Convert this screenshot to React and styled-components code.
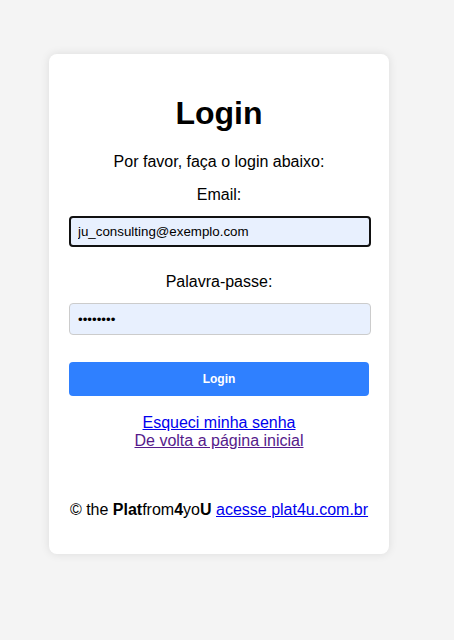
import React from 'react';
import styled, { createGlobalStyle } from 'styled-components';

const GlobalStyle = createGlobalStyle`
  body {
    margin: 0;
    background: #f4f4f4;
    font-family: "Liberation Sans", Arial, sans-serif;
    color: #000;
  }
`;

const Page = styled.div`
  padding: 54px 0 0 49px;
  min-height: 640px;
  box-sizing: border-box;
`;

const Card = styled.div`
  width: 340px;
  box-sizing: border-box;
  padding: 16px 20px 35px;
  background: #fff;
  border-radius: 8px;
  box-shadow: 0 0 10px rgba(0, 0, 0, 0.1);
  text-align: center;
`;

const Title = styled.h1`
  font-size: 32px;
  font-weight: bold;
  margin: 25px 0 21px;
  line-height: 37px;
`;

const Text = styled.p`
  font-size: 16px;
  line-height: 18px;
  margin: 0 0 ${(p) => p.$gap || 0}px;
`;

const Label = styled.label`
  display: block;
  font-size: 16px;
  line-height: 18px;
  margin-bottom: 12px;
`;

const Field = styled.div`
  margin-bottom: ${(p) => p.$gap}px;
`;

const Input = styled.input`
  display: block;
  width: calc(100% + 2px);
  box-sizing: border-box;
  height: ${(p) => (p.$focused ? 31 : 32)}px;
  padding: 0 ${(p) => (p.$focused ? 7 : 8)}px;
  font-family: "Liberation Sans", Arial, sans-serif;
  font-size: 13.33px;
  color: #000;
  background: #e8f0fe;
  border: ${(p) => (p.$focused ? '2px solid #111' : '1px solid #ccc')};
  border-radius: 4px;
  outline: none;
`;

const Button = styled.button`
  display: block;
  width: 100%;
  height: 34px;
  border: none;
  border-radius: 4px;
  background: #2f80ff;
  color: #fff;
  font-family: "Liberation Sans", Arial, sans-serif;
  font-size: 12px;
  font-weight: bold;
  margin-bottom: 18px;
`;

const Links = styled.div`
  display: flex;
  flex-direction: column;
  align-items: center;
  font-size: 16px;
  line-height: 18px;
  margin-bottom: 51px;
`;

const Link = styled.a`
  color: ${(p) => (p.$visited ? '#551a8b' : '#0000ee')};
  text-decoration: underline;
`;

const Footer = styled.p`
  font-size: 16px;
  line-height: 18px;
  margin: 0;
`;

export default function App() {
  return (
    <>
      <GlobalStyle />
      <Page>
        <Card>
          <Title>Login</Title>
          <Text $gap={15}>Por favor, faça o login abaixo:</Text>
          <Field $gap={26}>
            <Label>Email:</Label>
            <Input $focused type="email" defaultValue="ju_consulting@exemplo.com" />
          </Field>
          <Field $gap={27}>
            <Label>Palavra-passe:</Label>
            <Input type="password" defaultValue="12345678" />
          </Field>
          <Button>Login</Button>
          <Links>
            <Link href="#">Esqueci minha senha</Link>
            <Link href="#" $visited>De volta a página inicial</Link>
          </Links>
          <Footer>
            © the <b>Plat</b>from<b>4</b>yo<b>U</b> <Link href="#">acesse plat4u.com.br</Link>
          </Footer>
        </Card>
      </Page>
    </>
  );
}
